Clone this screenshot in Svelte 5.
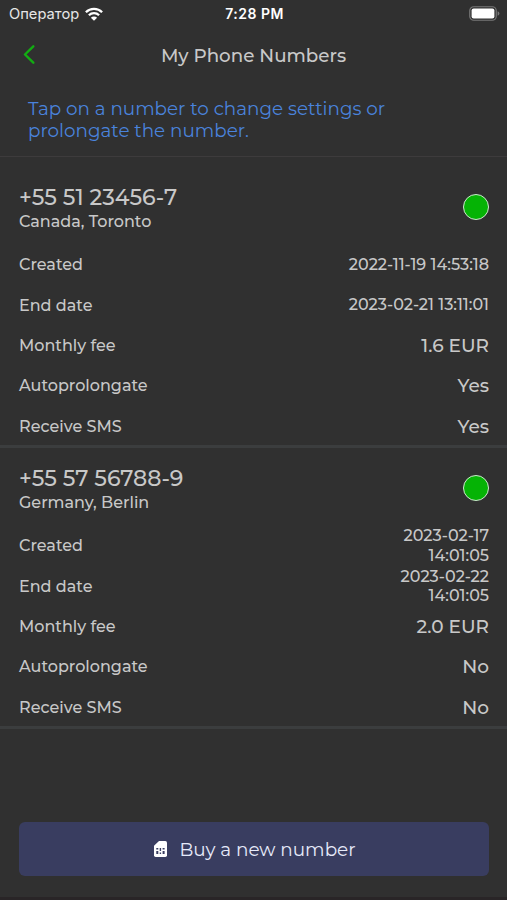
<script lang="ts">
  const numbers = [
    {
      phone: '+55 51 23456-7',
      place: 'Canada, Toronto',
      created: '2022-11-19 14:53:18',
      end: '2023-02-21 13:11:01',
      fee: '1.6 EUR',
      autoprolongate: true,
      sms: true,
    },
    {
      phone: '+55 57 56788-9',
      place: 'Germany, Berlin',
      created: '2023-02-17\n14:01:05',
      end: '2023-02-22\n14:01:05',
      fee: '2.0 EUR',
      autoprolongate: false,
      sms: false,
    },
  ];

  const yesNo = (value: boolean) => (value ? 'Yes' : 'No');
</script>

<div class="screen">
  <div class="status-bar">
    <div class="carrier">
      <span class="carrier-name">Оператор</span>
      <svg class="wifi" viewBox="0 0 18 14" fill="none" stroke="#fff" stroke-width="2.3">
        <path d="M0.9 5.2a11.5 11.5 0 0 1 16.2 0" />
        <path d="M3.9 8.3a7.2 7.2 0 0 1 10.2 0" />
        <path d="M9 13.8 5.9 10.7a4.4 4.4 0 0 1 6.2 0Z" fill="#fff" stroke="none" />
      </svg>
    </div>
    <div class="time">7:28 PM</div>
    <div class="power">
      <svg class="battery" viewBox="0 0 31 15">
        <rect x="0.75" y="0.75" width="26.5" height="13.5" rx="4" fill="none" stroke="#777" stroke-width="1.2" />
        <rect x="2.6" y="2.6" width="22.8" height="9.8" rx="2" fill="#fff" />
        <path d="M28.6 5.2q1.8.6 1.8 2.3t-1.8 2.3z" fill="#777" />
      </svg>
    </div>
  </div>

  <header class="header">
    <button class="back" aria-label="Back">
      <svg viewBox="0 0 12 20" fill="none" stroke="#12ad12" stroke-width="2.4" stroke-linecap="round" stroke-linejoin="round"><path d="M10.3 1.3 2 9.5l8.3 8.2" /></svg>
    </button>
    <h1 class="title">My Phone Numbers</h1>
    <span></span>
  </header>

  <p class="hint">Tap on a number to change settings or<br />prolongate the number.</p>

  <main class="list">
    {#each numbers as item}
      <section class="card">
        <div class="card-head">
          <div class="card-name">
            <div class="phone">{item.phone}</div>
            <div class="place">{item.place}</div>
          </div>
          <span class="dot"></span>
        </div>
        <div class="row"><span class="label">Created</span><span class="date">{item.created}</span></div>
        <div class="row"><span class="label">End date</span><span class="date">{item.end}</span></div>
        <div class="row"><span class="label">Monthly fee</span><span class="value">{item.fee}</span></div>
        <div class="row"><span class="label">Autoprolongate</span><span class="value">{yesNo(item.autoprolongate)}</span></div>
        <div class="row"><span class="label">Receive SMS</span><span class="value">{yesNo(item.sms)}</span></div>
      </section>
    {/each}
  </main>

  <footer class="footer">
    <button class="buy">
      <svg class="sim" viewBox="0 0 13 16">
        <path d="M5 0h6.3A1.7 1.7 0 0 1 13 1.7v12.6a1.7 1.7 0 0 1-1.7 1.7H1.7A1.7 1.7 0 0 1 0 14.3V4.8z" fill="#fff" />
        <path d="M2.3 7h2v1.6h-2zM5.7 7h1.4v3H5.7zM8.6 7h2v1.6h-2zM2.3 10h2v3h-2zM5.7 11.5h1.4V13H5.7zM8.6 10h2v3h-2z" fill="#393d60" />
      </svg>
      <span>Buy a new number</span>
    </button>
  </footer>
</div>

<style>
:global(body) {
  background: #303030;
}
.screen {
  display: flex;
  flex-direction: column;
  box-sizing: border-box;
  height: 900px;
  overflow: hidden;
  background: #303030;
  border-bottom: 3px solid #292527;
  color: #c8c8c8;
  font-family: Montserrat, Inter, sans-serif;
  font-weight: 500;
}
button {
  padding: 0;
  border: 0;
  background: none;
  font: inherit;
  cursor: pointer;
}
.status-bar {
  display: grid;
  grid-template-columns: 1fr auto 1fr;
  align-items: center;
  box-sizing: border-box;
  height: 28px;
  padding: 0 7px 1px 9px;
  color: #fff;
  font-family: Inter, sans-serif;
}
.carrier {
  display: flex;
  align-items: center;
  gap: 6px;
}
.carrier-name {
  font-size: 14.7px;
  font-weight: 400;
  color: #e6e6e6;
}
.wifi {
  width: 18px;
  height: 14px;
}
.time {
  font-size: 14px;
  font-weight: 600;
  letter-spacing: 0.5px;
}
.power {
  display: flex;
  justify-content: flex-end;
}
.battery {
  width: 31px;
  height: 15px;
}
.header {
  display: grid;
  grid-template-columns: 1fr auto 1fr;
  align-items: center;
  height: 54px;
  padding: 0 23px;
}
.back {
  width: 12px;
  height: 20px;
}
.back svg {
  display: block;
  width: 12px;
  height: 20px;
}
.title {
  margin: 0;
  font-size: 18.3px;
  font-weight: 500;
}
.hint {
  box-sizing: border-box;
  height: 75px;
  margin: 0;
  padding: 16px 28px 0;
  border-bottom: 1px solid #3d3b3c;
  font-size: 18.35px;
  font-weight: 400;
  line-height: 22px;
  color: #4a83dc;
}
.list {
  flex: 1;
  padding-top: 10px;
}
.card {
  height: 278px;
  padding: 0 18px 0 19px;
  border-bottom: 3px solid #3b3d3e;
}
.card-head {
  display: flex;
  align-items: center;
  justify-content: space-between;
  box-sizing: border-box;
  height: 77.5px;
  padding-top: 3px;
}
.card-name {
  padding-top: 4px;
}
.phone {
  font-size: 22px;
  line-height: 26px;
}
.place {
  font-size: 16px;
  line-height: 22px;
}
.dot {
  box-sizing: border-box;
  width: 26px;
  height: 26px;
  border: 1.5px solid #cde8cd;
  border-radius: 50%;
  background: #05b305;
}
.row {
  display: flex;
  align-items: center;
  justify-content: space-between;
  height: 40.4px;
}
.label {
  font-size: 16px;
}
.date {
  font-size: 16px;
  line-height: 19.5px;
  text-align: right;
  white-space: pre-line;
}
.value {
  font-size: 18.5px;
}
.footer {
  padding: 0 18px 21px 19px;
}
.buy {
  display: flex;
  align-items: center;
  justify-content: center;
  gap: 12px;
  width: 100%;
  height: 54px;
  padding-left: 2px;
  border-radius: 6px;
  background: #393d60;
  color: #e6eafa;
  font-size: 18.4px;
  font-weight: 400;
}
.sim {
  width: 13px;
  height: 16px;
}
</style>
